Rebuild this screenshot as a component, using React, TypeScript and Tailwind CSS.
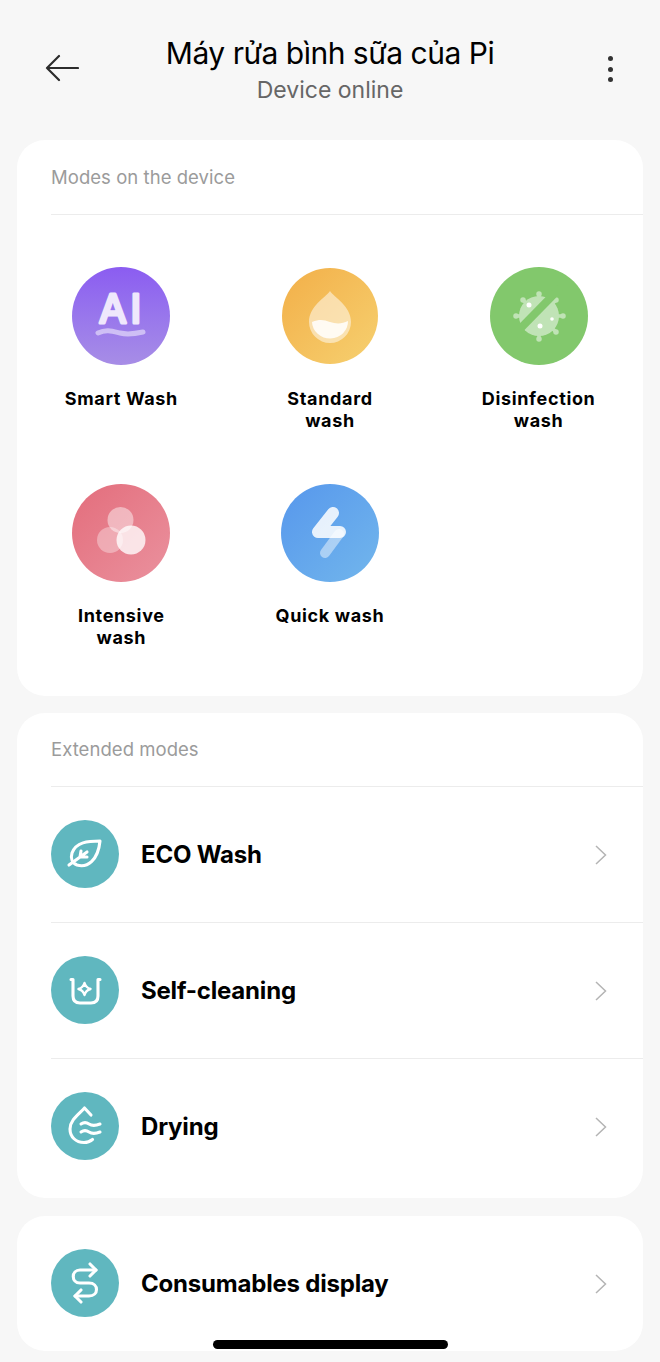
import type { ReactNode } from "react";

const SmartIcon = () => (
  <svg viewBox="0 0 98 98" className="size-full">
    <text x="27" y="56" fontSize="40" fontWeight="400" fill="#efe8fc" stroke="#efe8fc" strokeWidth="3.2" strokeLinejoin="round" letterSpacing="4" fontFamily="Inter, sans-serif">
      AI
    </text>
    <path d="M26 66c8-4 14-2 22 0s14 1 23-1" fill="none" stroke="#fff" strokeOpacity=".5" strokeWidth="5" strokeLinecap="round" />
  </svg>
);

const DropIcon = () => (
  <svg viewBox="0 0 96 96" className="size-full">
    <path d="M48 23 C44 29 27 38 27 54 a21 21 0 0 0 42 0 C69 38 52 29 48 23Z" fill="#fff" fillOpacity=".5" />
    <path d="M30 54 c8-3 12-2 18 0 s12 2 18-1 a18 17 0 0 1-36 1Z" fill="#fff" fillOpacity=".85" />
  </svg>
);

const VirusIcon = () => (
  <svg viewBox="0 0 98 98" className="size-full">
    <g opacity=".5" fill="#fff" stroke="#fff">
      <circle cx="49" cy="49" r="20" strokeWidth="0" />
      <path d="M49 27v8M33 33l6 6M26 49h8M49 72v-8M66 65l-6-6M73 49h-8M66 33l-6 6" fill="none" strokeWidth="3.5" strokeLinecap="round" />
      <circle cx="49" cy="27" r="2" strokeWidth="1.5" />
      <circle cx="33" cy="33" r="2" strokeWidth="1.5" />
      <circle cx="26" cy="49" r="2" strokeWidth="1.5" />
      <circle cx="49" cy="72" r="2" strokeWidth="1.5" />
      <circle cx="66" cy="65" r="2" strokeWidth="1.5" />
      <circle cx="73" cy="49" r="2" strokeWidth="1.5" />
      <circle cx="66" cy="33" r="2" strokeWidth="1.5" />
    </g>
    <path d="M24 68 70 21" stroke="#82c86c" strokeWidth="8" />
    <g fill="#fff">
      <circle cx="39" cy="38" r="2.5" />
      <circle cx="50" cy="59" r="2.5" />
      <circle cx="62" cy="52" r="1.8" />
    </g>
  </svg>
);

const BubblesIcon = () => (
  <svg viewBox="0 0 98 98" className="size-full">
    <circle cx="48.5" cy="36" r="13" fill="#fff" fillOpacity=".45" />
    <circle cx="38" cy="56" r="13" fill="#fff" fillOpacity=".35" />
    <circle cx="59" cy="56" r="14.5" fill="#fff" fillOpacity=".78" />
  </svg>
);

const BoltIcon = () => (
  <svg viewBox="0 0 98 98" className="size-full">
    <path d="M58 50 44 69" fill="none" stroke="#fff" strokeOpacity=".45" strokeWidth="10" strokeLinecap="round" />
    <path d="M52 29 37 48h22" fill="none" stroke="#fff" strokeOpacity=".85" strokeWidth="12" strokeLinecap="round" strokeLinejoin="round" />
  </svg>
);

const LeafIcon = () => (
  <svg viewBox="0 0 68 68" className="size-full" fill="none" stroke="#fff" strokeWidth="3.1" strokeLinecap="round" strokeLinejoin="round">
    <path d="M49 21C37 21 25 22 21 33c-1.500 5 0 10 5 12 10 3 21-4 23-24Z" />
    <path d="M18 45 36 32M29 37l1-6M30 37h6" />
  </svg>
);

const BasinIcon = () => (
  <svg viewBox="0 0 68 68" className="size-full" fill="none" stroke="#fff" strokeWidth="3.1" strokeLinecap="round" strokeLinejoin="round">
    <path d="M20 23.500h2V40q0 7 7 7h11q7 0 7-7V23.500h2" />
    <path d="M33.500 27c1 3.500 2.500 5 6 6-3.500 1-5 2.500-6 6-1-3.500-2.500-5-6-6 3.500-1 5-2.500 6-6Z" strokeWidth="2.400" />
  </svg>
);

const DryingIcon = () => (
  <svg viewBox="0 0 68 68" className="size-full" fill="none" stroke="#fff" strokeWidth="3.1" strokeLinecap="round" strokeLinejoin="round">
    <path d="M40 23 33.500 16C28 22 19 28 19 37c0 8 6 13.500 14 13.500 3 0 6-1 8.500-3" />
    <path d="M30 32c3-2 5-2 8 0s6 2 11 0M30 40c3-2 5-2 8 0s6 2 11 0" />
  </svg>
);

const SwapIcon = () => (
  <svg viewBox="0 0 68 68" className="size-full" fill="none" stroke="#fff" strokeWidth="3.1" strokeLinecap="round" strokeLinejoin="round">
    <path d="M45 21H29c-9 0-9 13 0 13h9c10 0 10 13 0 13H24" />
    <path d="M39 15l6 6-6 6M30 41l-6 6 6 6" />
  </svg>
);

const Chevron = () => (
  <svg viewBox="0 0 12 20" className="h-5 w-3 shrink-0" fill="none" stroke="#b4b4b4" strokeWidth="1.5">
    <path d="M1 1l9.500 9L1 19" />
  </svg>
);

const modes: { label: ReactNode; icon: ReactNode; circle: string }[] = [
  { label: "Smart Wash", icon: <SmartIcon />, circle: "size-[98px] bg-linear-to-b from-[#8b5cf1] to-[#a78de6]" },
  { label: <>Standard<br />wash</>, icon: <DropIcon />, circle: "size-[96px] bg-linear-to-br from-[#f2af48] to-[#f6d06f]" },
  { label: <>Disinfection<br />wash</>, icon: <VirusIcon />, circle: "size-[98px] bg-[#82c86c]" },
  { label: <>Intensive<br />wash</>, icon: <BubblesIcon />, circle: "size-[98px] bg-linear-to-br from-[#e36d7c] to-[#ea919e]" },
  { label: "Quick wash", icon: <BoltIcon />, circle: "size-[98px] bg-linear-to-br from-[#5797ec] to-[#72b6ec]" },
];

const extended = [
  { label: "ECO Wash", icon: <LeafIcon /> },
  { label: "Self-cleaning", icon: <BasinIcon /> },
  { label: "Drying", icon: <DryingIcon /> },
];

const Row = ({ label, icon }: { label: string; icon: ReactNode }) => (
  <div className="flex h-[135px] items-center pr-[36px] pl-[34px]">
    <div className="mb-px size-[68px] shrink-0 rounded-full bg-[#60b7bf]">{icon}</div>
    <span className="ml-[22px] flex-1 text-[24px] leading-none font-bold tracking-[-0.2px] text-black">{label}</span>
    <Chevron />
  </div>
);

export default function App() {
  return (
    <div className="relative h-[1362px] w-[660px] overflow-hidden bg-[#f7f7f7] font-['Inter',sans-serif]">
      <header className="flex h-[140px] items-start pt-[34px] pr-[47px] pl-[45px]">
        <svg viewBox="0 0 34 28" className="mt-[20px] h-[28px] w-[34px] shrink-0" fill="none" stroke="#2c2c2c" strokeWidth="2.2" strokeLinecap="round" strokeLinejoin="round">
          <path d="M33 14H2M14 2 2 14l12 12" />
        </svg>
        <div className="flex flex-1 flex-col items-center">
          <h1 className="text-[30px] leading-[38px] font-normal tracking-[-0.5px] text-black">Máy rửa bình sữa của Pi</h1>
          <p className="mt-[1px] text-[23px] leading-[34px] text-[#666]">Device online</p>
        </div>
        <div className="mt-[22px] flex h-[26px] w-[32px] shrink-0 flex-col items-end justify-between">
          <span className="size-[5px] rounded-full bg-[#333]" />
          <span className="size-[5px] rounded-full bg-[#333]" />
          <span className="size-[5px] rounded-full bg-[#333]" />
        </div>
      </header>

      <main className="px-[17px]">
        <section className="mb-[17px] rounded-[28px] bg-white pb-[47px]">
          <div className="ml-[34px] border-b border-[#ececec] pt-[25px] pb-[24px] text-[18.5px] leading-[25px] tracking-[0.05px] text-[#9b9b9b]">
            Modes on the device
          </div>
          <div className="grid grid-cols-3 gap-y-[52px] pt-[52px]">
            {modes.map((mode, idx) => (
              <div key={idx} className="flex h-[165px] flex-col items-center">
                <div className="flex h-[98px] items-center">
                  <div className={`rounded-full ${mode.circle}`}>{mode.icon}</div>
                </div>
                <div className="mt-[23px] text-center text-[18px] leading-[22px] font-bold tracking-[0.65px] text-black">{mode.label}</div>
              </div>
            ))}
          </div>
        </section>

        <section className="mb-[18px] rounded-[28px] bg-white pb-[4px]">
          <div className="ml-[34px] border-b border-[#ececec] pt-[24px] pb-[24px] text-[18.5px] leading-[25px] tracking-[0.05px] text-[#9b9b9b]">
            Extended modes
          </div>
          {extended.map((item, idx) => (
            <div key={item.label}>
              <Row {...item} />
              {idx < extended.length - 1 && <div className="ml-[34px] h-px bg-[#ececec]" />}
            </div>
          ))}
        </section>

        <section className="rounded-[28px] bg-white">
          <Row label="Consumables display" icon={<SwapIcon />} />
        </section>
      </main>

      {/* home indicator */}
      <div className="absolute top-[1340px] left-[213px] h-[9px] w-[235px] rounded-full bg-black" />
    </div>
  );
}
